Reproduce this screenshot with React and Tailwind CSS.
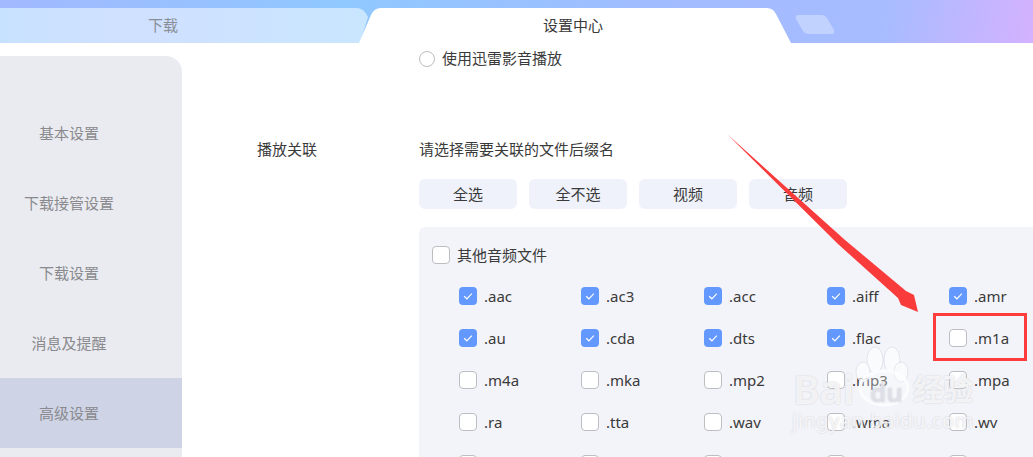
const cjk = { fontFamily: '"Noto Sans","Noto Sans CJK SC",sans-serif' };

const rows = [
  [".aac", ".ac3", ".acc", ".aiff", ".amr"],
  [".au", ".cda", ".dts", ".flac", ".m1a"],
  [".m4a", ".mka", ".mp2", ".mp3", ".mpa"],
  [".ra", ".tta", ".wav", ".wma", ".wv"],
  ["", "", "", "", ""],
];
const checked = new Set([".aac", ".ac3", ".acc", ".aiff", ".amr", ".au", ".cda", ".dts", ".flac"]);
const nav = ["基本设置", "下载接管设置", "下载设置", "消息及提醒", "高级设置"];

function Box({ on }) {
  if (on) {
    return (
      <span className="flex h-[18px] w-[18px] shrink-0 items-center justify-center rounded-[4px] bg-[#6398ff]">
        <svg width="12" height="12" viewBox="0 0 12 12" fill="none">
          <path d="M2.2 6.2 L4.9 8.8 L9.8 3.6" stroke="#fff" strokeWidth="1.2" />
        </svg>
      </span>
    );
  }
  return <span className="h-[18px] w-[18px] shrink-0 rounded-[4px] border border-[#bdbdc2] bg-white" />;
}

export default function App() {
  return (
    <div className="relative h-[457px] w-[1033px] overflow-hidden bg-white text-[15px] text-[#3a3a3a]" style={cjk}>
      <header className="relative flex h-[43px] bg-[linear-gradient(100deg,#a2b8ff_0%,#8fc8ff_33%,#a2bcff_65%,#a6bcff_85%,#dab0ff_102%)]">
        <svg className="absolute inset-0" width="1033" height="43" viewBox="0 0 1033 43">
          <defs>
            <linearGradient id="t1" x1="0" x2="1" y1="0" y2="0">
              <stop offset="0" stopColor="#c6e2ff" />
              <stop offset="0.35" stopColor="#d0e0ff" />
              <stop offset="1" stopColor="#c9e6ff" />
            </linearGradient>
          </defs>
          <path d="M-10 8 H356 Q364 8 368 17 L360 43 H-10 Z" fill="url(#t1)" />
          <path d="M359 43 L371 15 Q374 8 381 8 H767 Q773 8 776 14 L791 43 Z" fill="#fff" />
          <path d="M798 15 H822 Q825 15 827 18 L834 30 Q835 34 832 34 H808 Q805 34 803 31 L796 19 Q795 15 798 15 Z" fill="#c1d2ff" />
        </svg>
        <div className="relative flex h-[43px] w-[326px] items-center justify-center pt-[8px] text-[#8a8e96]">下载</div>
        <div className="relative ml-[31px] flex h-[43px] w-[432px] items-center justify-center pt-[7px] text-[#3a3a3a]">设置中心</div>
      </header>

      <div className="flex">
        <aside className="mt-[13px] h-[401px] w-[182px] shrink-0 rounded-tr-[16px] bg-[#e9ebf0] pt-[42px]">
          {nav.map((n, i) => (
            <div
              key={n}
              className={`flex h-[70px] items-center justify-center pr-[44px] text-[#8a8a8e] ${i === 4 ? "bg-[#ced3e6]" : ""}`}
            >
              {n}
            </div>
          ))}
        </aside>

        <main className="flex-1 pl-[237px]">
          <div className="flex h-[31px] items-center gap-[7px]">
            <span className="h-[16px] w-[16px] rounded-full border border-[#bdbdc2] bg-white" />
            <span>使用迅雷影音播放</span>
          </div>
          <div className="relative mt-[59px] flex h-[32px] items-center">
            <span className="absolute left-[-162px]">播放关联</span>
            <span>请选择需要关联的文件后缀名</span>
          </div>
          <div className="mt-[14px] flex gap-[12px]">
            {["全选", "全不选", "视频", "音频"].map((b) => (
              <div key={b} className="flex h-[30px] w-[98px] items-center justify-center rounded-[6px] bg-[#eff2fa]">
                {b}
              </div>
            ))}
          </div>
          <section className="mt-[18px] h-[260px] rounded-tl-[6px] bg-[#f3f4f9] pl-[13px] pt-[19px]">
            <div className="flex h-[18px] items-center gap-[7px]">
              <Box />
              <span>其他音频文件</span>
            </div>
            <div className="mt-[11px] pl-[27px]">
              {rows.map((r, i) => (
                <div key={i} className="grid h-[42px] grid-cols-[122px_123px_123px_122px_122px] items-center">
                  {r.map((t, j) => (
                    <div key={j} className="flex items-center gap-[7px]">
                      <Box on={checked.has(t)} />
                      <span>{t}</span>
                    </div>
                  ))}
                </div>
              ))}
            </div>
          </section>
        </main>
      </div>

      <svg className="pointer-events-none absolute inset-0" width="1033" height="457" viewBox="0 0 1033 457">
        <path d="M727 134 L845 240 L906 291 L914 295 L918 312 L901 305 L898 298 L838 244 Z" fill="#f93b3b" />
        <rect x="934.5" y="314.5" width="91" height="45" fill="none" stroke="#ff3b3b" strokeWidth="3" />
        <g fill="#fff" fillOpacity="0.6" stroke="#dcdde4" strokeOpacity="0.7">
          <ellipse cx="875" cy="360" rx="8" ry="13" />
          <ellipse cx="892" cy="360" rx="8" ry="13" />
          <ellipse cx="863" cy="372" rx="7" ry="10" />
          <ellipse cx="901" cy="372" rx="7" ry="10" />
        </g>
        <ellipse cx="884" cy="388" rx="24" ry="17" fill="#fff" fillOpacity="0.3" stroke="#fff" strokeOpacity="0.7" strokeWidth="3" />
      </svg>
      <div className="pointer-events-none absolute left-[793px] top-[366px] flex h-[46px] items-center font-semibold text-white/75 [text-shadow:0_0_2px_#c9cad2]">
        <span className="w-[77px] text-[40px] leading-[46px]">Bai</span>
        <span className="w-[43px] pt-[6px] text-[26px] leading-[40px] text-[#e6e7ee]/70">du</span>
        <span className="text-[30px] leading-[46px]">经验</span>
      </div>
      <div className="pointer-events-none absolute left-[792px] top-[409px] text-[20px] leading-[24px] tracking-[0.5px] text-white/75 [text-shadow:0_0_2px_#c9cad2]">
        jingyan.baidu.com
      </div>
    </div>
  );
}
